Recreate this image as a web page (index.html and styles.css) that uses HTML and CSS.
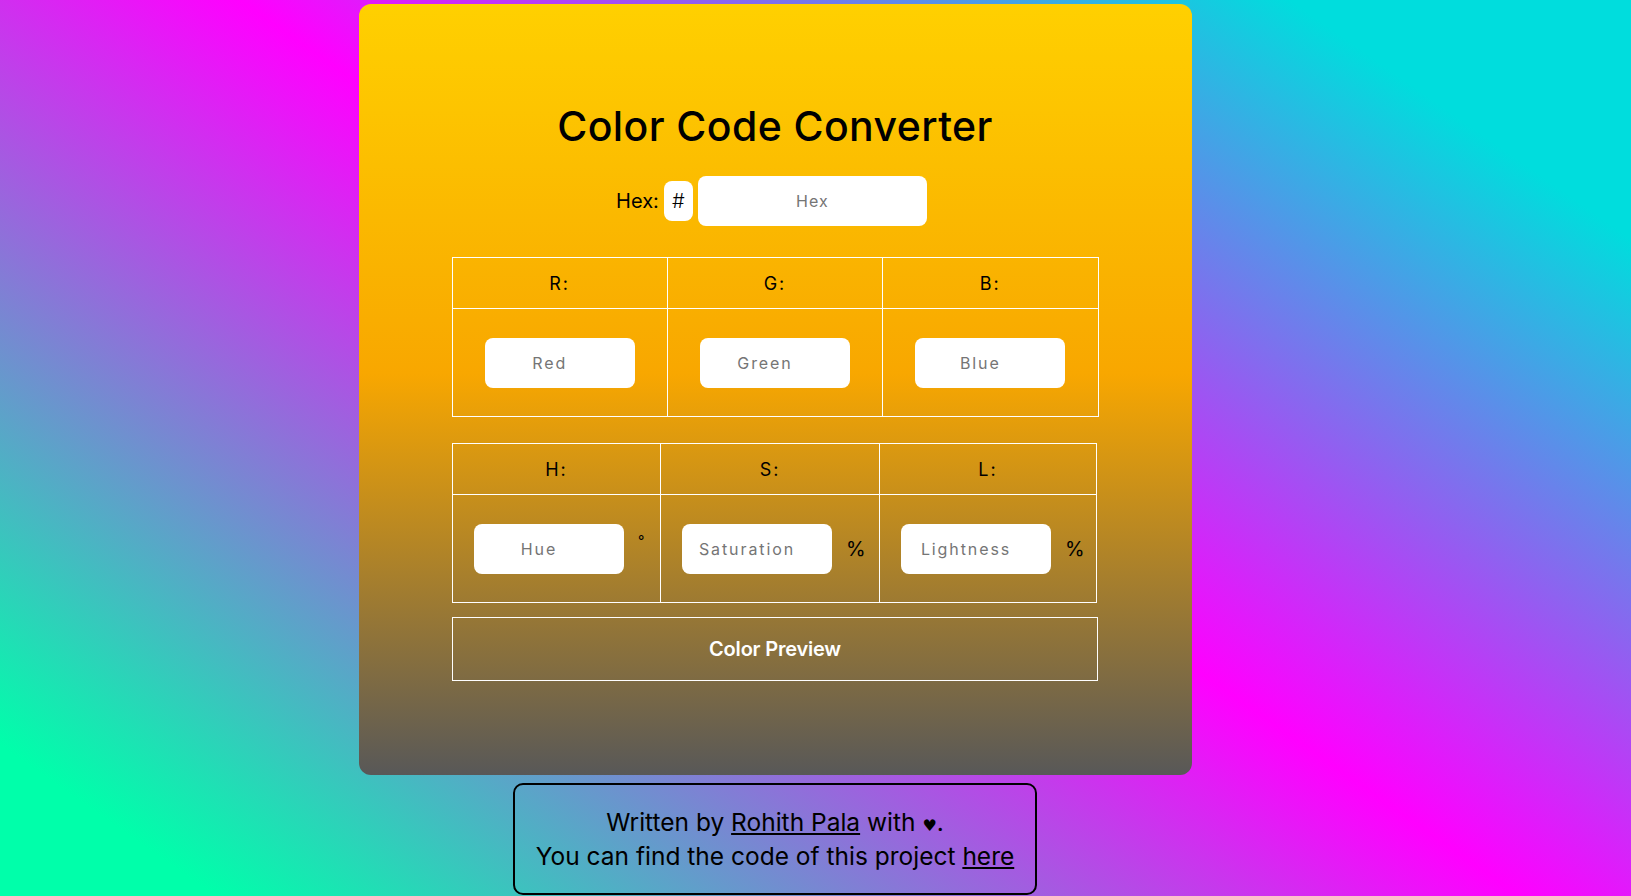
FILE: index.html
```html
<!DOCTYPE html>
<html lang="en">
<head>
<meta charset="utf-8">
<title>Color Code Converter</title>
<link rel="stylesheet" href="styles.css">
</head>
<body>
<div class="page">
  <main class="card">
    <h1 class="title">Color Code Converter</h1>
    <div class="hex-row">
      <label class="hex-label" for="hex">Hex:</label>
      <span class="hash">#</span>
      <input id="hex" class="field field-hex" type="text" placeholder="Hex">
    </div>

    <table class="grid grid-rgb">
      <thead>
        <tr><th>R:</th><th>G:</th><th>B:</th></tr>
      </thead>
      <tbody>
        <tr>
          <td><div class="cell cell-center"><input class="field field-num" type="number" placeholder="Red"></div></td>
          <td><div class="cell cell-center"><input class="field field-num" type="number" placeholder="Green"></div></td>
          <td><div class="cell cell-center"><input class="field field-num" type="number" placeholder="Blue"></div></td>
        </tr>
      </tbody>
    </table>

    <table class="grid grid-hsl">
      <thead>
        <tr><th class="col-h">H:</th><th class="col-s">S:</th><th class="col-l">L:</th></tr>
      </thead>
      <tbody>
        <tr>
          <td><div class="cell"><input class="field field-num" type="number" placeholder="Hue"><span class="unit unit-deg">°</span></div></td>
          <td><div class="cell"><input class="field field-num" type="number" placeholder="Saturation"><span class="unit">%</span></div></td>
          <td><div class="cell"><input class="field field-num" type="number" placeholder="Lightness"><span class="unit">%</span></div></td>
        </tr>
      </tbody>
    </table>

    <div class="preview">Color Preview</div>
  </main>

  <footer class="credits">
    <p class="credits-line">Written by <a href="#">Rohith Pala</a> with <span class="heart">♥</span>.</p>
    <p class="credits-line">You can find the code of this project <a href="#">here</a></p>
  </footer>
</div>
</body>
</html>
```

FILE: styles.css
```css
html {
  height: 100%;
}

body {
  margin: 0;
  min-height: 100%;
  font-family: Inter, "Noto Sans", sans-serif;
  color: #000;
  background: linear-gradient(215deg, #00dddd 0%, #00dddd 11.7%, #ff00ff 47.8%, #00ffaa 92.6%, #00ffaa 100%);
}

.page {
  width: 1550px;
  display: flex;
  flex-direction: column;
  align-items: center;
}

.card {
  box-sizing: border-box;
  width: 833px;
  height: 771px;
  margin-top: 4px;
  padding-top: 98px;
  border-radius: 12px;
  background: linear-gradient(180deg, #ffd000 0%, #f8a700 48%, #585858 100%);
  display: flex;
  flex-direction: column;
  align-items: center;
}

.title {
  margin: 0;
  font-size: 41px;
  line-height: 48px;
  font-weight: 500;
  letter-spacing: 0.4px;
}

.hex-row {
  margin-top: 26px;
  padding-right: 7px;
  display: flex;
  align-items: center;
  gap: 5px;
  font-size: 20px;
}

.hash {
  box-sizing: border-box;
  width: 29px;
  height: 40px;
  display: flex;
  align-items: center;
  justify-content: center;
  background: #fff;
  border-radius: 8px;
  font-size: 20px;
  font-weight: 300;
}

.field {
  box-sizing: border-box;
  height: 50px;
  border: none;
  border-radius: 8px;
  background: #fff;
  font-family: inherit;
  font-size: 16px;
  letter-spacing: 1.9px;
  text-align: center;
  color: #000;
  outline: none;
}

.field::placeholder {
  color: #757575;
}

.field-hex {
  width: 229px;
  letter-spacing: 1px;
}

.field-num {
  width: 150px;
  padding: 0 20px 0 0;
  -moz-appearance: textfield;
}

.field-num::-webkit-inner-spin-button,
.field-num::-webkit-outer-spin-button {
  -webkit-appearance: none;
  display: none;
  margin: 0;
}

.grid {
  border-collapse: collapse;
  table-layout: fixed;
}

.grid th,
.grid td {
  border: 1px solid #fff;
  padding: 0;
}

.grid th {
  height: 50px;
  font-size: 18px;
  font-weight: 400;
  letter-spacing: 2px;
}

.grid td {
  height: 107px;
}

.grid-rgb {
  width: 647px;
  margin-top: 31px;
}

.grid-hsl {
  width: 645px;
  margin-top: 26px;
  margin-left: -1px;
}

.col-h {
  width: 207px;
}

.col-s {
  width: 218px;
}

.cell {
  display: flex;
  align-items: center;
  gap: 14px;
  padding-left: 21px;
}

.cell-center {
  justify-content: center;
  padding-left: 0;
}

.unit {
  font-size: 20px;
}

.unit-deg {
  align-self: flex-start;
  font-size: 14px;
  line-height: 14px;
  margin-top: 10px;
}

.preview {
  box-sizing: border-box;
  width: 646px;
  height: 64px;
  margin-top: 14px;
  border: 1px solid #fff;
  display: flex;
  align-items: center;
  justify-content: center;
  color: #fff;
  font-size: 20px;
  font-weight: 600;
  letter-spacing: -0.2px;
}

.credits {
  box-sizing: border-box;
  margin-top: 8px;
  padding: 20px 21px;
  border: 2px solid #000;
  border-radius: 10px;
  text-align: center;
  font-size: 24.5px;
  line-height: 34px;
}

.credits-line {
  margin: 0;
}

.credits a {
  color: #000;
  text-decoration: underline;
}

.heart {
  font-family: "DejaVu Sans", sans-serif;
  font-size: 16px;
  line-height: 1;
}
```
